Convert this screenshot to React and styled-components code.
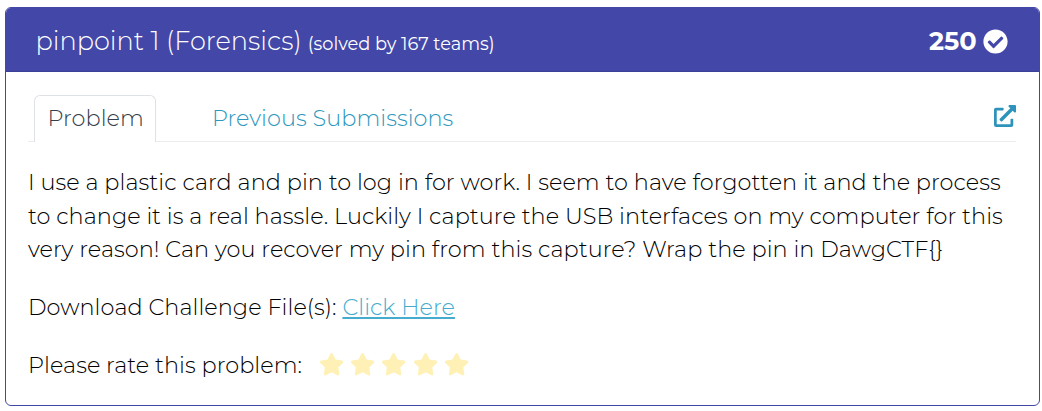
import React from "react";
import styled, { createGlobalStyle } from "styled-components";
import { FaCheckCircle, FaExternalLinkAlt, FaStar } from "react-icons/fa";

const GlobalStyle = createGlobalStyle`
  *, *::before, *::after { box-sizing: border-box; }
  body {
    margin: 0;
    background: #fff;
    color: #000;
    font-family: Montserrat, Inter, "Open Sans", sans-serif;
    font-size: 22.4px;
    font-weight: 300;
    line-height: 33.6px;
  }
`;

const Card = styled.article`
  width: 1035px;
  height: 399px;
  margin: 7px 0 0 5px;
  border: 1px solid #4348a8;
  border-radius: 6px;
  overflow: hidden;
  background: #fff;
`;

const Header = styled.header`
  display: flex;
  align-items: center;
  justify-content: space-between;
  height: 64px;
  padding: 3px 31px 0 29.5px;
  background: #4348a8;
  border-bottom: 1px solid #3c4197;
  color: #fff;
`;

const Title = styled.h1`
  margin: 0;
  padding-top: 2px;
  display: flex;
  align-items: baseline;
  gap: 6px;
  font-size: 25.6px;
  font-weight: 300;
  white-space: nowrap;
`;

const Solved = styled.small`
  font-size: 17.8px;
  font-weight: 400;
`;

const Points = styled.div`
  display: flex;
  align-items: center;
  gap: 6.4px;
  font-size: 25.6px;
  font-weight: 700;
`;

const Body = styled.div`
  padding: 23px 23px 0 22px;
`;

const TabBar = styled.nav`
  display: flex;
  align-items: flex-start;
  height: 47px;
  padding-left: 6px;
  border-bottom: 1px solid #ececec;
`;

const Tab = styled.a`
  height: 47px;
  padding: 6px 12px 0 12.5px;
  border: 1px solid ${(p) => (p.$active ? "#dee2e6" : "transparent")};
  border-bottom: 0;
  border-radius: 6px 6px 0 0;
  background: ${(p) => (p.$active ? "#fff" : "transparent")};
  color: ${(p) => (p.$active ? "#34404c" : "#2e97bd")};
  width: ${(p) => p.$width}px;
  margin-right: 42.5px;
  white-space: nowrap;
`;

const OpenLink = styled.a`
  margin: 10px 0 0 auto;
  color: #2e93ba;
  line-height: 0;
`;

const Paragraph = styled.p`
  margin: 24px 0 0;
  white-space: nowrap;
`;

const Line = styled.span`
  display: ${(p) => (p.$inline ? "inline" : "block")};
  letter-spacing: ${(p) => p.$track ?? 0.05}px;
`;

const Download = styled.a`
  color: #45accf;
  text-decoration: underline;
  text-decoration-thickness: 2px;
  text-underline-offset: 2px;
`;

const Rating = styled.div`
  display: flex;
  align-items: center;
  margin-top: 25px;
`;

const Stars = styled.div`
  display: flex;
  gap: 6px;
  margin: -3px 0 0 17px;
  color: #fff1b5;

  svg {
    width: 25.2px;
    height: 22.4px;
  }
`;

export default function App() {
  return (
    <>
      <GlobalStyle />
      <Card>
        <Header>
          <Title>
            <Line $inline $track={0}>pinpoint 1 (Forensics)</Line>
            <Solved>
              <Line $inline $track={0}>(solved by 167 teams)</Line>
            </Solved>
          </Title>
          <Points>
            <Line $inline $track={0}>250</Line>
            <FaCheckCircle size={25} />
          </Points>
        </Header>
        <Body>
          <TabBar>
            <Tab $active $width={122}>
              <Line $inline>Problem</Line>
            </Tab>
            <Tab $width={270}>
              <Line $inline>Previous Submissions</Line>
            </Tab>
            <OpenLink>
              <FaExternalLinkAlt size={22} />
            </OpenLink>
          </TabBar>
          <Paragraph>
            <Line>I use a plastic card and pin to log in for work. I seem to have forgotten it and the process</Line>
            <Line>to change it is a real hassle. Luckily I capture the USB interfaces on my computer for this</Line>
            <Line>very reason! Can you recover my pin from this capture? Wrap the pin in DawgCTF{"{}"}</Line>
          </Paragraph>
          <Paragraph>
            <Line $inline>Download Challenge File(s): </Line>
            <Download>
              <Line $inline>Click Here</Line>
            </Download>
          </Paragraph>
          <Rating>
            <Line $inline>Please rate this problem:</Line>
            <Stars>
              {[1, 2, 3, 4, 5].map((n) => (
                <FaStar key={n} />
              ))}
            </Stars>
          </Rating>
        </Body>
      </Card>
    </>
  );
}
